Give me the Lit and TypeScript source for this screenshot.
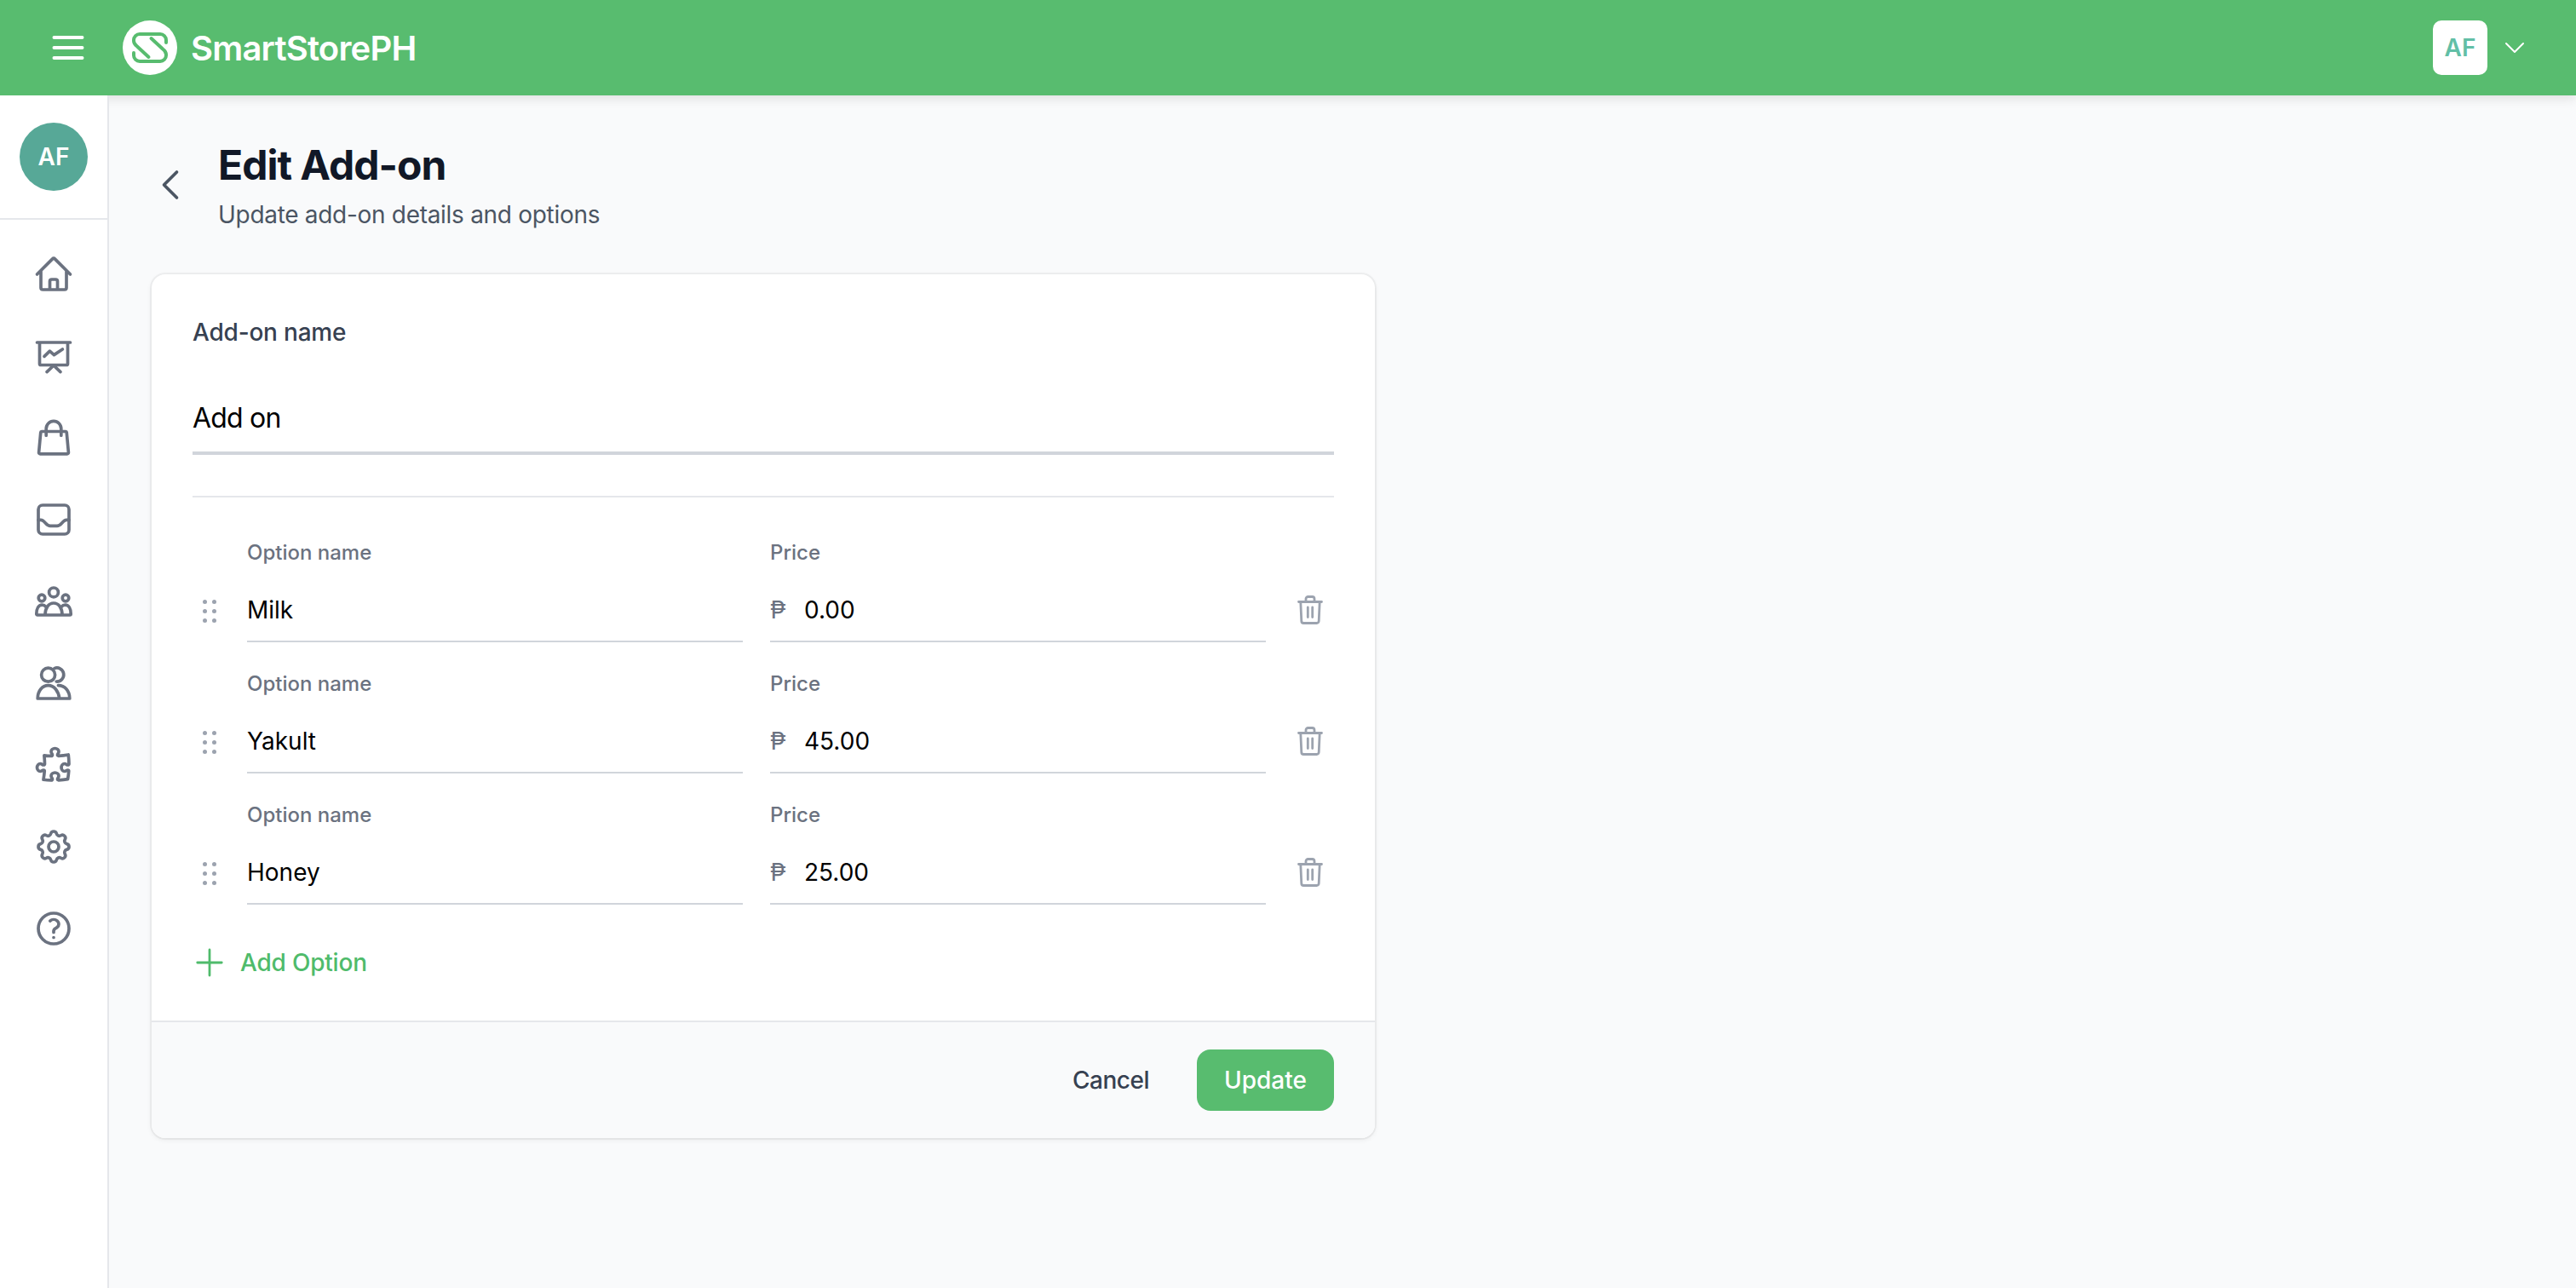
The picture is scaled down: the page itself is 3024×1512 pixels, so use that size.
import { LitElement, html, css, svg } from "lit";
import { customElement } from "lit/decorators.js";

const navIcons = [
  svg`<path d="m2.25 12 8.954-8.955c.44-.439 1.152-.439 1.591 0L21.75 12M4.5 9.75v10.125c0 .621.504 1.125 1.125 1.125H9.75v-4.875c0-.621.504-1.125 1.125-1.125h2.25c.621 0 1.125.504 1.125 1.125V21h4.125c.621 0 1.125-.504 1.125-1.125V9.75M8.25 21h8.25"/>`,
  svg`<path d="M2.25 4h19.5M3.75 4v12.5a.75.75 0 0 0 .75.75h15a.75.75 0 0 0 .75-.75V4M6.5 12.2l3.2-3.1 2.5 2.2 5-3.3M8 21.3l4-3.8 4 3.8"/>`,
  svg`<path d="M4.9 8.25h14.2a.5.5 0 0 1 .5.45l1.1 11.9a.75.75 0 0 1-.75.8H4.05a.75.75 0 0 1-.75-.8l1.1-11.9a.5.5 0 0 1 .5-.45zM7.6 10.6V6.6a4.4 4.4 0 0 1 8.8 0v4"/>`,
  svg`<rect x="3" y="3.5" width="18" height="17" rx="2.5"/><path d="M3 12.2h1.4c1.2 0 2 .9 2.9 1.9.8.9 1.6 1.6 2.7 1.6h4c1.1 0 1.9-.7 2.7-1.6.9-1 1.7-1.9 2.9-1.9H21"/>`,
  svg`<circle cx="12" cy="6.7" r="2.7"/><circle cx="5" cy="10" r="1.9"/><circle cx="19" cy="10" r="1.9"/><path d="M2.500 20h19c.4 0 .6-.3.6-.6 0-3-1.200-5.300-3.300-5.300-1 0-1.700.4-2.200 1M2.500 20c-.4 0-.6-.3-.6-.6 0-3 1.200-5.300 3.300-5.300 1 0 1.700.4 2.200 1M7 20c0-4.200 2-7 5-7s5 2.800 5 7"/>`,
  svg`<circle cx="8.800" cy="7.100" r="4"/><path d="M12.400 3.300a4 4 0 1 1 1.200 7.700M2.600 21h18.800c0-4.400-2.800-7.700-6.700-7.700M2.600 21c0-4.400 2.700-7.700 6.200-7.700s6 3.300 6.600 7.700"/>`,
  svg`<path d="M14.25 6.087c0-.355.186-.676.401-.959.221-.29.349-.634.349-1.003 0-1.036-1.007-1.875-2.25-1.875s-2.25.84-2.25 1.875c0 .369.128.713.349 1.003.215.283.401.604.401.959v0a.64.64 0 0 1-.657.643 48.39 48.39 0 0 1-4.163-.3c.186 1.613.293 3.25.315 4.907a.656.656 0 0 1-.658.663v0c-.355 0-.676-.186-.959-.401a1.647 1.647 0 0 0-1.003-.349c-1.036 0-1.875 1.007-1.875 2.25s.84 2.25 1.875 2.25c.369 0 .713-.128 1.003-.349.283-.215.604-.401.959-.401v0c.31 0 .555.26.532.57a48.039 48.039 0 0 1-.642 5.056c1.518.19 3.058.309 4.616.354a.64.64 0 0 0 .657-.643v0c0-.355-.186-.676-.401-.959a1.647 1.647 0 0 1-.349-1.003c0-1.035 1.008-1.875 2.25-1.875 1.243 0 2.25.84 2.25 1.875 0 .369-.128.713-.349 1.003-.215.283-.4.604-.4.959v0c0 .333.277.599.61.58a48.1 48.1 0 0 0 5.427-.63 48.05 48.05 0 0 0 .582-4.717.532.532 0 0 0-.533-.57v0c-.355 0-.676.186-.959.401-.29.221-.634.349-1.003.349-1.035 0-1.875-1.007-1.875-2.25s.84-2.25 1.875-2.25c.37 0 .713.128 1.003.349.283.215.604.401.96.401v0a.656.656 0 0 0 .658-.663 48.422 48.422 0 0 0-.37-5.36c-1.886.342-3.81.574-5.766.689a.578.578 0 0 1-.61-.58v0Z"/>`,
  svg`<path d="M10.325 4.317c.426-1.756 2.924-1.756 3.35 0a1.724 1.724 0 0 0 2.573 1.066c1.543-.94 3.31.826 2.37 2.37a1.724 1.724 0 0 0 1.065 2.572c1.756.426 1.756 2.924 0 3.35a1.724 1.724 0 0 0-1.066 2.573c.94 1.543-.826 3.31-2.37 2.37a1.724 1.724 0 0 0-2.572 1.065c-.426 1.756-2.924 1.756-3.35 0a1.724 1.724 0 0 0-2.573-1.066c-1.543.94-3.31-.826-2.37-2.37a1.724 1.724 0 0 0-1.065-2.572c-1.756-.426-1.756-2.924 0-3.35a1.724 1.724 0 0 0 1.066-2.573c-.94-1.543.826-3.31 2.37-2.37.996.608 2.296.07 2.572-1.065z"/><circle cx="12" cy="12" r="3"/>`,
  svg`<path d="M9.879 7.519c1.171-1.025 3.071-1.025 4.242 0 1.172 1.025 1.172 2.687 0 3.712-.203.179-.43.326-.67.442-.745.361-1.45.999-1.45 1.827v.75M21 12a9 9 0 1 1-18 0 9 9 0 0 1 18 0Zm-9 5.250h.008v.008H12v-.008Z"/>`,
];

const options = [
  { name: "Milk", price: "0.00" },
  { name: "Yakult", price: "45.00" },
  { name: "Honey", price: "25.00" },
];

@customElement("app-root")
export class AppRoot extends LitElement {
  static styles = css`
    :host {
      display: block;
      position: relative;
      height: 1512px;
      overflow: hidden;
      background: #f9fafb;
      font-family: Inter, "Noto Sans", sans-serif;
      color: #111827;
    }
    svg { display: block; }
    .line {
      fill: none;
      stroke: currentColor;
      stroke-width: 1.85;
      stroke-linecap: round;
      stroke-linejoin: round;
    }
    .header {
      position: relative;
      z-index: 1;
      height: 112px;
      background: #58bc6f;
      box-shadow: 0 4px 12px rgba(0, 0, 0, 0.1);
      display: flex;
      align-items: center;
      padding: 0 56px;
      color: #fff;
    }
    .burger { width: 48px; height: 48px; margin-right: 40px; stroke-width: 2; }
    .logo { width: 64px; height: 64px; margin-right: 16px; }
    .brand {
      font-size: 40px;
      font-weight: 600;
      letter-spacing: -0.8px;
      flex: 1;
    }
    .user {
      width: 64px;
      height: 64px;
      border-radius: 10px;
      background: #fff;
      color: #62bfa6;
      font-size: 28px;
      font-weight: 600;
      display: flex;
      align-items: center;
      justify-content: center;
      margin-right: 16px;
    }
    .caret { width: 32px; height: 32px; stroke-width: 1.5; }
    .body { display: flex; height: 1400px; }
    .sidebar {
      position: relative;
      z-index: 2;
      width: 128px;
      box-sizing: border-box;
      background: #fff;
      border-right: 2px solid #e5e7eb;
      flex: none;
    }
    .profile {
      height: 146px;
      box-sizing: border-box;
      padding-top: 32px;
      border-bottom: 2px solid #e5e7eb;
      display: flex;
      justify-content: center;
    }
    .avatar {
      width: 80px;
      height: 80px;
      border-radius: 50%;
      background: #57a897;
      color: #fff;
      font-size: 28px;
      font-weight: 600;
      display: flex;
      align-items: center;
      justify-content: center;
    }
    .nav {
      display: flex;
      flex-direction: column;
      align-items: center;
      gap: 48px;
      padding-top: 40px;
      color: #6b7280;
    }
    .nav svg { width: 48px; height: 48px; }
    .main { flex: 1; padding: 50px 0 0 48px; }
    .head { display: flex; align-items: center; gap: 32px; }
    .back { width: 48px; height: 48px; color: #4b5563; }
    .title {
      font-size: 48px;
      line-height: 64px;
      font-weight: 700;
      letter-spacing: -1px;
      color: #111827;
    }
    .sub {
      margin-top: 6px;
      font-size: 28px;
      line-height: 40px;
      letter-spacing: -0.3px;
      color: #4b5563;
    }
    .card {
      margin: 50px 0 0 2px;
      width: 1436px;
      background: #fff;
      border-radius: 16px;
      box-shadow: 0 0 0 2px rgba(0, 0, 0, 0.04), 0 2px 6px rgba(0, 0, 0, 0.07);
      overflow: hidden;
    }
    .content { padding: 48px 48px 0; }
    .name-label {
      font-size: 28px;
      line-height: 40px;
      font-weight: 500;
      letter-spacing: -0.2px;
      color: #374151;
    }
    .name-input {
      margin-top: 40px;
      height: 80px;
      display: flex;
      align-items: center;
      font-size: 32px;
      letter-spacing: -0.8px;
      color: #000;
      border-bottom: 4px solid #d1d5db;
    }
    .rule { height: 2px; background: #e5e7eb; margin: 48px 0; }
    .opts { display: flex; flex-direction: column; gap: 32px; }
    .opt { display: flex; align-items: flex-end; }
    .grip {
      width: 64px;
      height: 74px;
      box-sizing: border-box;
      padding: 24px 0 0 12px;
      flex: none;
    }
    .dots {
      display: grid;
      grid-template-columns: 5px 5px;
      grid-auto-rows: 5px;
      gap: 6px 6px;
    }
    .dots i { border-radius: 50%; background: #9ca3af; }
    .fields { flex: 1; display: flex; gap: 32px; }
    .field { flex: 1; }
    .small {
      padding-top: 1px;
      font-size: 24px;
      line-height: 32px;
      font-weight: 500;
      color: #6b7280;
    }
    .value {
      margin-top: 15px;
      height: 72px;
      display: flex;
      align-items: center;
      font-size: 28px;
      color: #000;
      border-bottom: 2px solid #d1d5db;
    }
    .peso { color: #6b7280; width: 40px; flex: none; }
    .trash-cell {
      width: 80px;
      height: 74px;
      flex: none;
      padding-left: 37px;
      box-sizing: border-box;
      display: flex;
      align-items: center;
      color: #9ca3af;
    }
    .trash-cell svg { width: 30px; height: 34px; margin-bottom: 2px; stroke-width: 2.8; }
    .add {
      margin-top: 48px;
      height: 40px;
      display: flex;
      align-items: center;
      color: #4fbb6b;
      font-size: 28px;
      font-weight: 500;
      letter-spacing: -0.2px;
      gap: 18px;
      padding-left: 2px;
    }
    .add svg { width: 36px; height: 36px; }
    .footer {
      margin-top: 48px;
      height: 138px;
      box-sizing: border-box;
      border-top: 2px solid #e5e7eb;
      background: #f9fafb;
      display: flex;
      align-items: center;
      justify-content: flex-end;
      padding: 0 48px;
      gap: 56px;
      font-size: 28px;
      font-weight: 500;
    }
    .cancel { color: #374151; letter-spacing: -0.5px; }
    .update {
      width: 161px;
      height: 72px;
      border-radius: 16px;
      background: #58bc6f;
      color: #fff;
      display: flex;
      align-items: center;
      justify-content: center;
    }
    .corner {
      position: absolute;
      left: 0;
      bottom: 0;
      width: 2px;
      height: 32px;
      background: linear-gradient(to bottom, rgba(0, 0, 0, 0), #000);
    }
  `;

  private icon(body: unknown, cls = "") {
    return html`<svg class="line ${cls}" viewBox="0 0 24 24">${body}</svg>`;
  }

  render() {
    return html`
      <div class="header">
        ${this.icon(svg`<path d="M3.750 6h16.500M3.750 12h16.500M3.750 18h16.500"/>`, "burger")}
        <svg class="logo" viewBox="0 0 64 64">
          <circle cx="32" cy="32" r="32" fill="#fff"/>
          <g fill="none" stroke="#58bc6f" stroke-width="4" stroke-linecap="round" stroke-linejoin="round">
            <path d="M51 26v-3a7 7 0 0 0-7-7H20a7 7 0 0 0-7 7v1c0 3 2 5 4 6.500L30.500 43"/>
            <path d="M13 38v3a7 7 0 0 0 7 7h24a7 7 0 0 0 7-7v-1c0-3-2-5-4-6.500L33.500 21"/>
          </g>
        </svg>
        <div class="brand">SmartStorePH</div>
        <div class="user">AF</div>
        ${this.icon(svg`<path d="m19.500 8.250-7.500 7.500-7.500-7.500"/>`, "caret")}
      </div>
      <div class="body">
        <div class="sidebar">
          <div class="profile"><div class="avatar">AF</div></div>
          <div class="nav">${navIcons.map((i) => this.icon(i))}</div>
        </div>
        <div class="main">
          <div class="head">
            ${this.icon(svg`<path d="M15.750 19.500 8.250 12l7.500-7.500"/>`, "back")}
            <div>
              <div class="title">Edit Add-on</div>
              <div class="sub">Update add-on details and options</div>
            </div>
          </div>
          <div class="card">
            <div class="content">
              <div class="name-label">Add-on name</div>
              <div class="name-input">Add on</div>
              <div class="rule"></div>
              <div class="opts">
                ${options.map(
                  (o) => html`
                    <div class="opt">
                      <div class="grip">
                        <div class="dots"><i></i><i></i><i></i><i></i><i></i><i></i></div>
                      </div>
                      <div class="fields">
                        <div class="field">
                          <div class="small">Option name</div>
                          <div class="value">${o.name}</div>
                        </div>
                        <div class="field">
                          <div class="small">Price</div>
                          <div class="value"><span class="peso">₱</span>${o.price}</div>
                        </div>
                      </div>
                      <div class="trash-cell">
                        <svg class="line" viewBox="0 0 30 34">
                          <path d="M1.500 7.500h27M10 7.500V4a2.500 2.500 0 0 1 2.500-2.500h5A2.500 2.500 0 0 1 20 4v3.500M3.800 7.500l1 22.500a2.500 2.500 0 0 0 2.500 2.500h15.400a2.500 2.500 0 0 0 2.500-2.500l1-22.500M12.300 14v11.500M17.700 14v11.500"/>
                        </svg>
                      </div>
                    </div>
                  `
                )}
              </div>
              <div class="add">
                ${this.icon(svg`<path d="M12 2v20M2.500 12h19"/>`)}
                <span>Add Option</span>
              </div>
            </div>
            <div class="footer">
              <span class="cancel">Cancel</span>
              <span class="update">Update</span>
            </div>
          </div>
        </div>
      </div>
      <div class="corner"></div>
    `;
  }
}
